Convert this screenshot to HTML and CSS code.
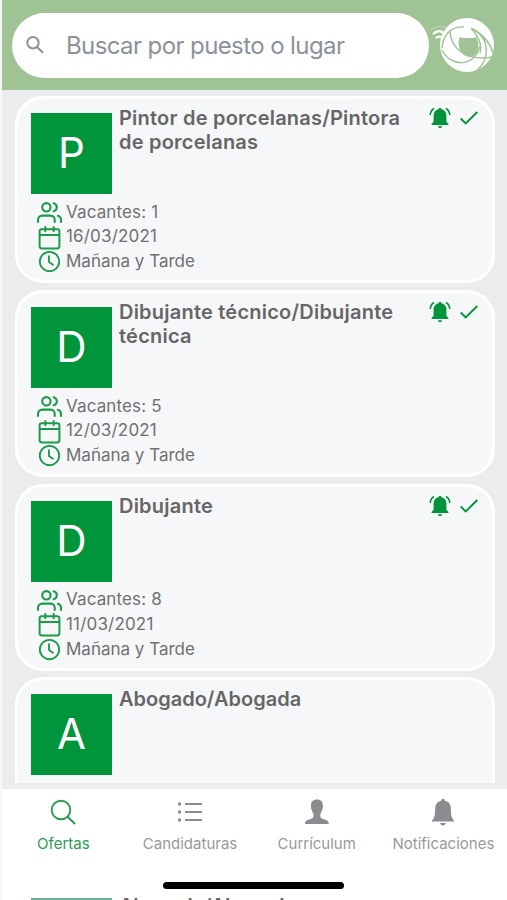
FILE: index.html
```html
<!DOCTYPE html>
<html lang="es">
<head>
<meta charset="utf-8">
<title>Ofertas</title>
<link rel="stylesheet" href="styles.css">
</head>
<body>
<svg class="defs" aria-hidden="true">
  <symbol id="users" viewBox="0 0 24 24"><g fill="none" stroke="currentColor" stroke-width="2" stroke-linecap="round" stroke-linejoin="round"><path d="M17 21v-2a4 4 0 0 0-4-4H5a4 4 0 0 0-4 4v2M23 21v-2a4 4 0 0 0-3-3.870M16 3.130a4 4 0 0 1 0 7.750"/><circle cx="9" cy="7" r="4"/></g></symbol>
  <symbol id="calendar" viewBox="0 0 24 24"><g fill="none" stroke="currentColor" stroke-width="1.900" stroke-linecap="round" stroke-linejoin="round"><rect x="2.500" y="4" width="19" height="18.500" rx="2"/><path d="M16 2v4M8 2v4M3 9.500h18"/></g></symbol>
  <symbol id="clock" viewBox="0 0 24 24"><g fill="none" stroke="currentColor" stroke-width="1.800" stroke-linecap="round" stroke-linejoin="round"><circle cx="12" cy="12" r="9.300"/><path d="M11.500 7v5.500l3.800 2.600"/></g></symbol>
  <symbol id="ringing" viewBox="0 0 22 22"><path fill="currentColor" d="M11 .8a1.500 1.500 0 0 1 1.500 1.500c3.200.8 4.900 3 4.900 6v6.200l2.100 2.700v.8h-17v-.8l2.100-2.700V8.300c0-3 1.700-5.200 4.900-6A1.500 1.500 0 0 1 11 .8zM9 19.200h4a2 2 0 0 1-4 0z"/><path fill="none" stroke="currentColor" stroke-width="1.600" d="M5 1.500C2.600 3 1.400 5 1.200 8M17 1.500c2.400 1.500 3.600 3.500 3.800 6.500"/></symbol>
  <symbol id="check" viewBox="0 0 20 16"><path fill="none" stroke="currentColor" stroke-width="1.900" d="M1.700 8.500l5 5L18.300 2"/></symbol>
</svg>
<div class="app">
  <header class="header">
    <label class="search">
      <svg class="search-icon" viewBox="0 0 20 20"><g fill="none" stroke="currentColor" stroke-width="2"><circle cx="8" cy="7.800" r="5.700"/><path d="M12 12l6 5.800"/></g></svg>
      <span class="placeholder">Buscar por puesto o lugar</span>
    </label>
    <svg class="logo" viewBox="0 0 68 60">
      <circle cx="38" cy="30" r="27" fill="#fff"/>
      <path d="M31 22l3 1h11l2-1c4 6 3 13-1 18-3 2-8 2-11 0-5-4-7-13-4-18z" fill="#9fc395"/>
      <g fill="none" stroke="#9fc395" stroke-width="1.400"><path d="M35 12c-13-1-21 8-22 21M21 15c0 17 15 32 43 27M13 35c9 18 33 17 38-4M42 13c12 6 18 16 14 31-2 5-5 9-9 12M42 13c8 4 18 12 22 25M42 13c7 8 12 16 9 25"/></g>
      <g fill="none" stroke="#fff" stroke-width="2.200"><path d="M4 19c4-4 9-4 12 1M7 23.500c2-3 5-2 7 0"/><path d="M1 15c5-4 12-5 17-2" stroke-width="1.500" opacity=".25"/></g>
    </svg>
  </header>
  <main class="list">
    <article class="card">
      <div class="top"><div class="tile">P</div><h2 class="title wide">Pintor de porcelanas/Pintora<br>de porcelanas</h2><div class="flags"><svg class="ringing"><use href="#ringing"/></svg><svg class="check"><use href="#check"/></svg></div></div>
      <ul class="meta"><li><svg><use href="#users"/></svg><span class="count">Vacantes: 1</span></li><li><svg><use href="#calendar"/></svg><span class="date">16/03/2021</span></li><li><svg><use href="#clock"/></svg>Mañana y Tarde</li></ul>
    </article>
    <article class="card">
      <div class="top"><div class="tile">D</div><h2 class="title wide">Dibujante técnico/Dibujante<br>técnica</h2><div class="flags"><svg class="ringing"><use href="#ringing"/></svg><svg class="check"><use href="#check"/></svg></div></div>
      <ul class="meta"><li><svg><use href="#users"/></svg><span class="count">Vacantes: 5</span></li><li><svg><use href="#calendar"/></svg><span class="date">12/03/2021</span></li><li><svg><use href="#clock"/></svg>Mañana y Tarde</li></ul>
    </article>
    <article class="card">
      <div class="top"><div class="tile">D</div><h2 class="title wide">Dibujante</h2><div class="flags"><svg class="ringing"><use href="#ringing"/></svg><svg class="check"><use href="#check"/></svg></div></div>
      <ul class="meta"><li><svg><use href="#users"/></svg><span class="count">Vacantes: 8</span></li><li><svg><use href="#calendar"/></svg><span class="date">11/03/2021</span></li><li><svg><use href="#clock"/></svg>Mañana y Tarde</li></ul>
    </article>
    <article class="card">
      <div class="top"><div class="tile">A</div><h2 class="title">Abogado/Abogada</h2></div>
    </article>
  </main>
  <nav class="tabs">
    <a class="tab active"><svg viewBox="0 0 28 28"><g fill="none" stroke="currentColor" stroke-width="1.900"><circle cx="12" cy="12" r="9.300"/><path d="M18.500 18.500l7.500 7.500"/></g></svg><span>Ofertas</span></a>
    <a class="tab"><svg viewBox="0 0 28 28"><g fill="currentColor"><circle cx="3.500" cy="6" r="1.700"/><circle cx="3.500" cy="14" r="1.700"/><circle cx="3.500" cy="22" r="1.700"/><path d="M9 5h17v2H9zM9 13h17v2H9zM9 21h17v2H9z"/></g></svg><span>Candidaturas</span></a>
    <a class="tab"><svg viewBox="0 0 28 28"><path fill="currentColor" d="M14 1.500c4 0 5.800 2.300 5.800 5.500 0 2 .2 3-.7 5-.5 2-1.500 3-1.800 4.500-.2 3 .5 3.700 3 4.500 3.500 1 5.500 2 5.500 5H2C2 23 4 22 7.500 21c2.500-.8 3.200-1.500 3-4.500-.3-1.500-1.300-2.500-1.800-4.500-.9-2-.7-3-.7-5 0-3.200 2-5.500 6-5.500z"/></svg><span>Currículum</span></a>
    <a class="tab"><svg viewBox="0 0 28 28"><path fill="currentColor" d="M14 .8c1.100 0 1.800.8 1.900 2 4 .8 6 4 6 8.200 0 6 .5 9 3.100 11.500v1H3v-1C5.600 20 6.100 17 6.100 11c0-4.200 2-7.400 6-8.200.1-1.200.8-2 1.900-2zM11 25h6c-.4 1.500-1.400 2.400-3 2.400S11.400 26.500 11 25z"/></svg><span>Notificaciones</span></a>
  </nav>
  <footer class="home"><div class="handle"></div></footer>
  <div class="next"><div class="next-tile"></div><span class="title">Abogado/Abogada</span></div>
</div>
</body>
</html>
```

FILE: styles.css
```css
* { box-sizing: border-box; }
body { margin: 0; background: #fff; font-family: Inter, "Liberation Sans", sans-serif; }
.defs { display: none; }
.app { width: 507px; height: 900px; display: flex; flex-direction: column; overflow: hidden; border-left: 2px solid #f5f6f5; }
.header { height: 90px; flex: none; display: flex; align-items: center; padding-left: 10px; background: #9fc395; }
.search { width: 417px; height: 65px; border-radius: 33px; background: #fff; display: flex; align-items: center; color: #8b929a; }
.search-icon { width: 20px; height: 20px; margin-left: 13px; }
.placeholder { margin-left: 21px; font-size: 24px; letter-spacing: -.6px; white-space: nowrap; }
.logo { width: 68px; height: 60px; flex: none; }
.list { height: 693px; flex: none; overflow: hidden; background: #ebeced; padding: 6px 12px 0 13px; display: flex; flex-direction: column; gap: 6.800px; }
.card { height: 187px; flex: none; border: 3px solid #fff; border-radius: 28px; background: #f6f7f9; padding: 7px 13px 0 13px; }
.top { display: flex; align-items: flex-start; }
.tile { width: 81px; height: 81px; margin-top: 7px; background: #00953b; color: #fff; font-size: 42px; line-height: 80px; text-align: center; flex: none; }
.title { margin: 0 0 0 7px; font-size: 20px; line-height: 24.300px; font-weight: 600; color: #666; white-space: nowrap; }
.wide { letter-spacing: .22px; }
.flags { margin-left: auto; display: flex; align-items: center; gap: 8px; color: #00953b; padding-top: 1px; }
.ringing { width: 22px; height: 22px; }
.check { width: 20px; height: 16px; }
.meta { list-style: none; margin: 5.500px 0 0; padding: 0 0 0 6px; font-size: 17px; color: #707070; }
.meta li { height: 24.600px; display: flex; align-items: center; gap: 4px; }
.meta svg { width: 25px; height: 25px; color: #1c9b4b; position: relative; top: 1px; }
.date { letter-spacing: .18px; }
.count { letter-spacing: .13px; }
.tabs { height: 88px; flex: none; border-top: 6px solid #ebeced; display: flex; background: #fff; margin-left: -2px; }
.tab { width: 126.700px; flex: none; display: flex; flex-direction: column; align-items: center; padding-top: 9px; font-size: 15px; color: #999; }
.tab svg { width: 28px; height: 28px; color: #8c8c90; }
.tab span { margin-top: 8px; line-height: 20px; }
.tab.active, .tab.active svg { color: #2b9b50; }
.home { height: 27px; flex: none; display: flex; justify-content: center; align-items: flex-end; padding: 0 2px 9px 0; }
.handle { width: 181px; height: 7px; border-radius: 4px; background: #000; }
.next { height: 2px; flex: none; overflow: hidden; display: flex; align-items: flex-start; padding-left: 29px; }
.next-tile { width: 81px; height: 2px; background: #6aad96; }
.next .title { margin-top: -4px; letter-spacing: -.4px; }
```
